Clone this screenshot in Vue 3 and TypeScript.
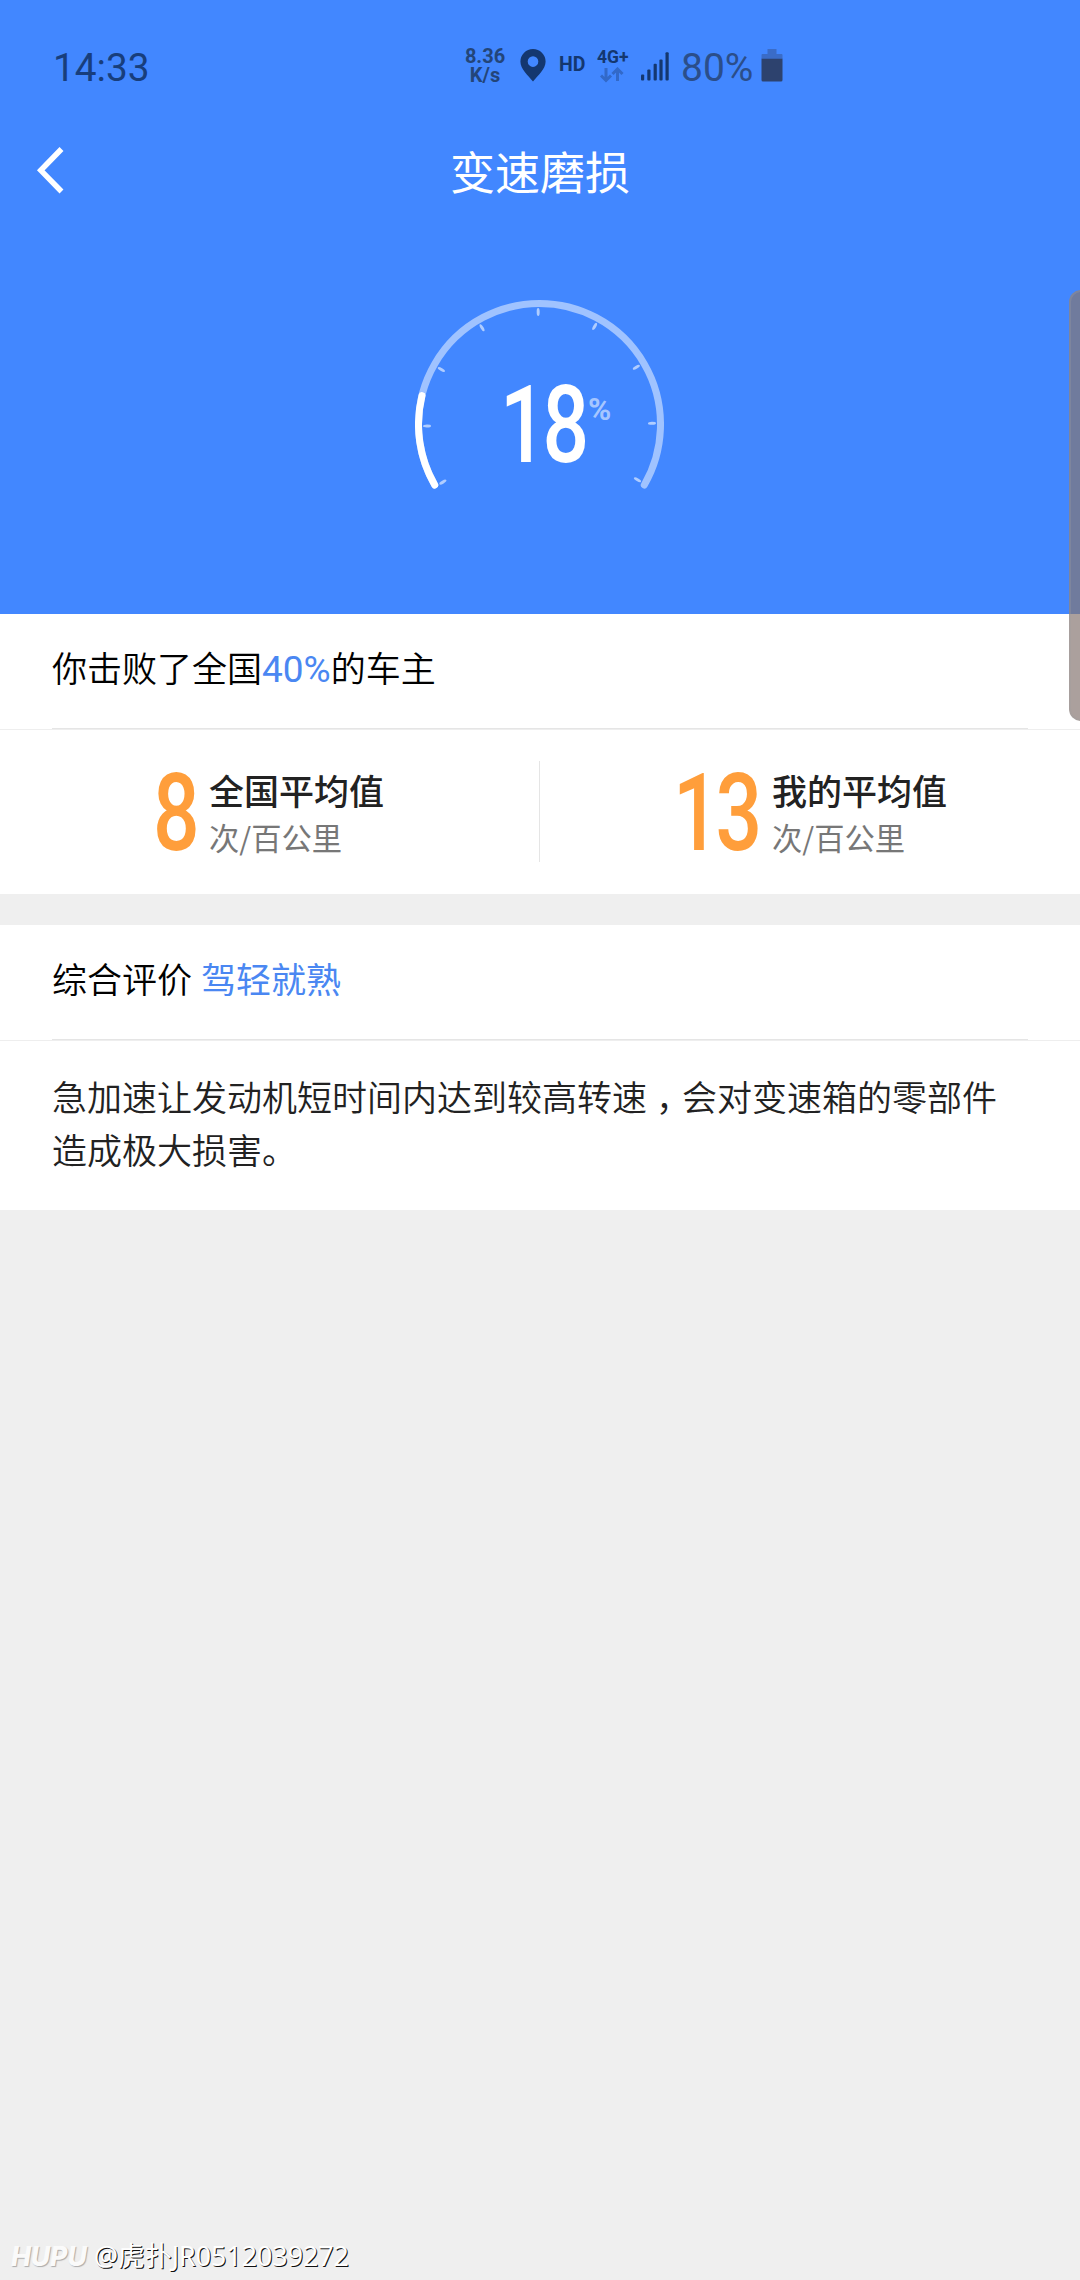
<script setup lang="ts">
interface Stat {
  value: string
  label: string
  unit: string
  side: string
}

const percent = 18
const radius = 121
const cx = 124.5
const cy = 124.5

function point(deg: number, r: number): { x: number; y: number } {
  const a = (deg * Math.PI) / 180
  return { x: cx + r * Math.cos(a), y: cy - r * Math.sin(a) }
}

function arc(from: number, to: number): string {
  const s = point(from, radius)
  const e = point(to, radius)
  const large = from - to > 180 ? 1 : 0
  return `M${s.x} ${s.y}A${radius} ${radius} 0 ${large} 1 ${e.x} ${e.y}`
}

const trackPath = arc(210, -30)
const valuePath = arc(210, 210 - (240 * percent) / 100 - 0.6)

const ticks = Array.from({ length: 9 }, (_, i) => {
  const deg = 210.8 - 30.03 * i
  return { ...point(deg, 112.5), deg: -deg }
})

const signalBars = [
  { x: 0, h: 6 },
  { x: 6.3, h: 11 },
  { x: 12.6, h: 16.7 },
  { x: 18.4, h: 21 },
  { x: 24.5, h: 28.3 },
]

const stats: Stat[] = [
  { value: '8', label: '全国平均值', unit: '次/百公里', side: 'left' },
  { value: '13', label: '我的平均值', unit: '次/百公里', side: 'right' },
]
</script>

<template>
  <div class="screen">
    <header class="hero">
      <div class="status">
        <span class="time">14:33</span>
        <div class="speed"><span>8.36</span><span>K/s</span></div>
        <svg class="pin" width="26" height="33" viewBox="0 0 26 33">
          <path fill="#14376f" fill-rule="evenodd" d="M13 0A12.6 12.6 0 0 0 .4 12.6C.4 20 8 26.500 13 32.500 18 26.500 25.600 20 25.600 12.600A12.600 12.600 0 0 0 13 0ZM13 7.300a5.300 5.300 0 1 1 0 10.600 5.300 5.300 0 0 1 0-10.600Z" />
        </svg>
        <span class="hd">HD</span>
        <div class="net">
          <span>4G+</span>
          <svg width="24" height="16" viewBox="0 0 24 16">
            <g fill="none" stroke="#3269c9" stroke-width="3">
              <path d="M6 1V13M1 8.500 6 13.500 11 8.500" />
              <path d="M17.500 14V2M12.500 7 17.500 2 22.500 7" />
            </g>
          </svg>
        </div>
        <svg class="signal" width="29" height="29" viewBox="0 0 29 29">
          <rect v-for="b in signalBars" :key="b.x" :x="b.x" :y="28.500 - b.h" width="3.200" :height="b.h" rx="1" fill="#14376f" />
        </svg>
        <span class="battery-text">80%</span>
        <svg class="battery" width="22" height="33" viewBox="0 0 22 33">
          <path fill="#3a6cc8" d="M6.500 0h9v5h5q1 0 1 1v4h-21V6q0-1 1-1h5Z" />
          <path fill="#2d426e" d="M.5 9.700h21V31q0 1.500-1.500 1.500H2Q.5 32.500.5 31Z" />
        </svg>
      </div>

      <nav class="nav">
        <svg class="back" width="30" height="48" viewBox="0 0 30 48">
          <path d="M25.500 3 4.800 24.300 25.500 45.500" fill="none" stroke="#fff" stroke-width="5.500" />
        </svg>
        <h1>变速磨损</h1>
      </nav>

      <svg class="gauge" width="249" height="200" viewBox="0 0 249 200">
        <path :d="trackPath" fill="none" stroke="#a0c3ff" stroke-width="7" stroke-linecap="round" />
        <path :d="valuePath" fill="none" stroke="#fff" stroke-width="7" stroke-linecap="round" />
        <ellipse
          v-for="t in ticks"
          :key="t.deg"
          rx="4"
          ry="1.500"
          fill="#b0cdff"
          :transform="`translate(${t.x} ${t.y}) rotate(${t.deg})`"
        />
        <g class="num" fill="#fff">
          <text transform="translate(85 162) scale(.76 1)">1</text>
          <text transform="translate(127.500 162) scale(.76 1)">8</text>
        </g>
        <text class="pct" x="173" y="119.500">%</text>
      </svg>
    </header>

    <section class="card">
      <div class="row">你击败了全国<em class="roman">40%</em>的车主</div>
      <div class="rule"><i></i></div>
      <div class="stats">
        <div v-for="s in stats" :key="s.label" class="stat" :class="s.side">
          <svg class="figure" :width="s.value.length > 1 ? 84 : 41" height="84" :viewBox="s.value.length > 1 ? '0 0 84 84' : '0 0 41 84'">
            <g class="num" fill="#ff9e3b">
              <text
                v-for="(d, i) in s.value.split('')"
                :key="i"
                :transform="`translate(${-2 + i * 42.500} 80) scale(.76 1)`"
              >{{ d }}</text>
            </g>
          </svg>
          <div class="caption">
            <strong>{{ s.label }}</strong>
            <span>{{ s.unit }}</span>
          </div>
        </div>
        <div class="split"></div>
      </div>
    </section>

    <section class="card review">
      <div class="row">综合评价<em class="grade">驾轻就熟</em></div>
      <div class="rule"><i></i></div>
      <p>急加速让发动机短时间内达到较高转速<span class="comma">，</span>会对变速箱的零部件造成极大损害。</p>
    </section>

    <footer class="mark"><b>HUPU</b><span>@虎扑JR0512039272</span></footer>
    <div class="edge-handle"></div>
  </div>
</template>

<style>
body {
  background: #efefef;
}
</style>

<style scoped>
.screen {
  position: relative;
  display: flex;
  flex-direction: column;
  width: 1080px;
  height: 2280px;
  overflow: hidden;
  background: #efefef;
  font-family: "Noto Sans CJK SC", sans-serif;
}
.hero {
  display: flex;
  flex-direction: column;
  height: 614px;
  background: #4287ff;
}
.status {
  display: flex;
  align-items: flex-start;
  height: 130px;
  font-family: Roboto, sans-serif;
  color: #14376f;
  white-space: nowrap;
}
.time {
  width: 409px;
  margin: 45px 0 0 53px;
  font-size: 38.800px;
  line-height: 46px;
  color: #183e7c;
}
.speed {
  display: flex;
  flex-direction: column;
  align-items: center;
  width: 46px;
  margin-top: 47px;
  font-size: 20px;
  font-weight: 700;
  line-height: 19px;
  color: #234579;
}
.pin {
  margin: 49px 0 0 12px;
}
.hd {
  width: 38px;
  margin: 53px 0 0 13px;
  font-size: 19.500px;
  font-weight: 700;
  line-height: 23px;
}
.net {
  display: flex;
  flex-direction: column;
  width: 44px;
  margin-top: 47px;
  font-size: 17.500px;
  font-weight: 700;
  line-height: 20px;
}
.net svg {
  margin-left: 3px;
}
.signal {
  margin-top: 52px;
}
.battery-text {
  width: 80px;
  margin: 45px 0 0 11px;
  font-size: 39px;
  font-weight: 400;
  line-height: 46px;
  color: #2b4e8a;
}
.battery {
  margin-top: 49px;
}
.nav {
  display: grid;
  grid-template-columns: 120px 1fr 120px;
  height: 86px;
}
.back {
  margin: 16px 0 0 36px;
}
h1 {
  margin: 8px 0 0;
  font-size: 45px;
  font-weight: 400;
  line-height: 66px;
  text-align: center;
  color: #fff;
}
.gauge {
  margin: 84px 0 0 414.500px;
}
.num {
  font-family: Roboto, sans-serif;
  font-size: 108px;
  font-weight: 500;
}
.pct {
  font-family: Roboto, sans-serif;
  font-size: 31.500px;
  font-weight: 700;
  fill: #a6c6ff;
}
.card {
  background: #fff;
}
.row {
  height: 114px;
  padding-left: 52px;
  font-size: 35px;
  font-weight: 350;
  line-height: 105px;
  color: #000;
}
em {
  font-style: normal;
  color: #4a87f2;
}
.roman {
  font-family: Roboto, sans-serif;
  font-size: 37px;
  font-weight: 400;
}
.grade {
  margin-left: 9px;
  font-weight: 400;
}
.rule {
  height: 1px;
  padding: 0 52px;
  border-bottom: 1px solid #eee;
}
.rule i {
  display: block;
  height: 1px;
  background: #e5e5e5;
}
.stats {
  position: relative;
  display: grid;
  grid-template-columns: 540px 540px;
  height: 164px;
}
.split {
  position: absolute;
  left: 539px;
  top: 31px;
  width: 1px;
  height: 101px;
  background: #e5e5e5;
}
.stat {
  display: flex;
}
.left {
  padding-left: 155px;
}
.right {
  padding-left: 135px;
}
.figure {
  margin-top: 40px;
  overflow: visible;
}
.caption {
  display: flex;
  flex-direction: column;
  gap: 4px;
  margin: 37px 0 0 13px;
}
.caption strong {
  font-size: 35px;
  font-weight: 500;
  line-height: 46px;
  color: #222;
}
.caption span {
  font-size: 30.300px;
  font-weight: 400;
  line-height: 40px;
  color: #777;
}
.review {
  margin-top: 31px;
}
p {
  height: 169px;
  box-sizing: border-box;
  margin: 0;
  padding: 28px 52px 0;
  font-size: 35px;
  font-weight: 350;
  line-height: 53px;
  color: #222;
}
.comma {
  display: inline-block;
  width: 35px;
  text-indent: 9px;
}
.mark {
  display: flex;
  align-items: baseline;
  margin: auto 0 4px 11px;
  font-family: "Noto Sans", "Noto Sans CJK SC", sans-serif;
  font-size: 26.800px;
  line-height: 40px;
  color: #fff;
  white-space: nowrap;
}
.mark span {
  text-shadow: 1px 1px 0.500px #111;
}
.mark b {
  width: 83px;
  font-family: Inter, sans-serif;
  font-size: 26.500px;
  font-style: italic;
  font-weight: 800;
  color: #fafafa;
  text-shadow: 1px 1px 1px #aaa;
}
.edge-handle {
  position: absolute;
  left: 1069px;
  top: 290px;
  width: 24px;
  height: 431px;
  box-sizing: border-box;
  border: 2px solid rgba(160, 160, 160, 0.300);
  border-radius: 16px;
  background: rgba(133, 118, 113, 0.690);
}
</style>
